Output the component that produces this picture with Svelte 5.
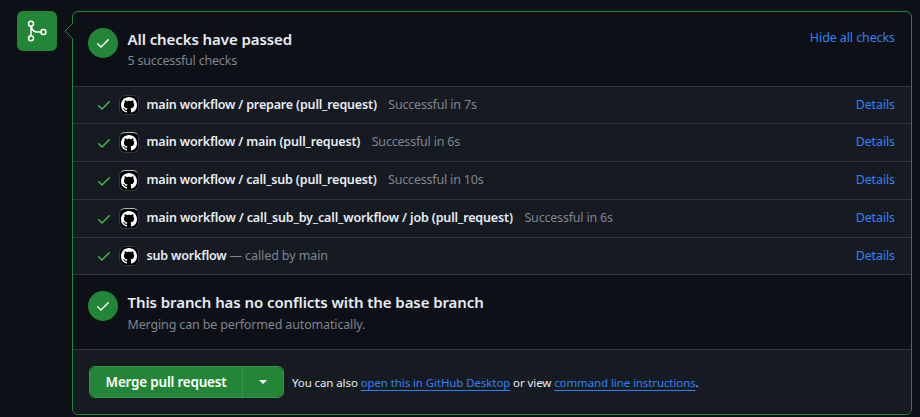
<script>
  const checks = [
    { name: 'main workflow / prepare (pull_request)', note: 'Successful in 7s' },
    { name: 'main workflow / main (pull_request)', note: 'Successful in 6s' },
    { name: 'main workflow / call_sub (pull_request)', note: 'Successful in 10s' },
    { name: 'main workflow / call_sub_by_call_workflow / job (pull_request)', note: 'Successful in 6s' },
    { name: 'sub workflow', note: '— called by main', inline: true }
  ];
</script>

{#snippet tick()}
  <svg class="tick" viewBox="0 0 16 16" width="16" height="16" fill="currentColor"><path d="M13.78 4.22a.75.75 0 0 1 0 1.06l-7.25 7.25a.75.75 0 0 1-1.06 0L2.22 9.28a.751.751 0 0 1 .018-1.042.751.751 0 0 1 1.042-.018L6 10.94l6.72-6.72a.75.75 0 0 1 1.06 0Z" /></svg>
{/snippet}

<main>
  <div class="badge">
    <svg viewBox="0 0 24 24" width="24" height="24" fill="none" stroke="currentColor" stroke-width="1.500"><circle cx="6" cy="4.700" r="2.500" /><circle cx="6" cy="19.200" r="2.500" /><circle cx="18.400" cy="13" r="2.500" /><path d="M6 7.200v9.500M6 7.200C7 11 9 13 12.500 13H15.900" /></svg>
  </div>
  <section class="box">
    <svg class="pointer" width="9" height="16" viewBox="0 0 9 16"><path d="M9 0 1 8l8 8Z" fill="#0d1117" /><path d="M8.5 .5 1 8l7.500 7.500" fill="none" stroke="#238636" /></svg>
    <header class="status">
      <span class="circle">{@render tick()}</span>
      <div class="copy">
        <h3 class="passed">All checks have passed</h3>
        <p class="count">5 successful checks</p>
      </div>
      <a class="hide" href="#checks">Hide all checks</a>
    </header>
    <ul>
      {#each checks as c}
        <li>
          <span class="ok">{@render tick()}</span>
          <span class="avatar">
            <svg viewBox="0 0 16 16" width="16" height="16" fill="#fff"><path d="M8 0c4.420 0 8 3.580 8 8a8.013 8.013 0 0 1-5.450 7.590c-.4.080-.55-.17-.55-.38 0-.27.010-1.130.010-2.200 0-.75-.25-1.230-.54-1.480 1.780-.2 3.650-.88 3.650-3.950 0-.88-.31-1.590-.82-2.150.080-.2.360-1.020-.08-2.120 0 0-.67-.22-2.200.82-.64-.18-1.320-.27-2-.27s-1.360.090-2 .27c-1.530-1.030-2.200-.82-2.200-.82-.44 1.100-.16 1.920-.08 2.120-.51.560-.82 1.280-.82 2.150 0 3.060 1.860 3.750 3.640 3.950-.23.200-.44.550-.51 1.070-.46.210-1.610.550-2.330-.66-.15-.24-.6-.83-1.230-.82-.67.010-.27.380.010.530.340.190.730.900.820 1.130.160.450.680 1.310 2.690.940 0 .67.010 1.300.010 1.490 0 .21-.15.450-.55.380A7.995 7.995 0 0 1 0 8c0-4.420 3.580-8 8-8Z" /></svg>
          </span>
          <strong>{c.name}</strong>
          <span class="note" class:inline={c.inline}>{c.note}</span>
          <a class="details" href="#details">Details</a>
        </li>
      {/each}
    </ul>
    <div class="status conflicts">
      <span class="circle">{@render tick()}</span>
      <div class="copy">
        <h3 class="branch">This branch has no conflicts with the base branch</h3>
        <p class="merging">Merging can be performed automatically.</p>
      </div>
    </div>
    <footer>
      <div class="group">
        <button class="merge">Merge pull request</button>
        <button class="more" aria-label="Select merge method"><svg width="8" height="4" viewBox="0 0 8 4"><path d="M0 0h8L4 4Z" fill="#fff" /></svg></button>
      </div>
      <p class="also">You can also <a href="#desktop">open this in GitHub Desktop</a> or view <a href="#cli">command line instructions</a>.</p>
    </footer>
  </section>
</main>

<style>
  :global(body) { margin: 0; background: #0d1117; }
  main { box-sizing: border-box; width: 920px; height: 417px; padding: 11px 8px 2px 17px; display: flex; align-items: flex-start; gap: 15px; background: #0d1117; color: #e6edf3; font-family: "Noto Sans", "Open Sans", sans-serif; font-size: 12.5px; letter-spacing: -0.19px; overflow: hidden; }
  .badge { width: 40px; height: 40px; flex: none; border-radius: 6px; background: #238636; color: #fff; display: flex; align-items: center; justify-content: center; }
  svg { display: block; flex: none; }
  .box { position: relative; box-sizing: border-box; width: 840px; height: 404px; border: 1px solid #238636; border-radius: 6px; display: flex; flex-direction: column; }
  .pointer { position: absolute; left: -9px; top: 11px; }
  a { color: #2f81f7; text-decoration: none; }
  h3, p, ul { margin: 0; padding: 0; }
  .status { box-sizing: border-box; flex: none; height: 74px; padding: 16px 16px 0 15px; display: flex; align-items: flex-start; gap: 9.5px; }
  .conflicts { border-top: 1px solid #30363d; height: 75px; }
  .circle { width: 30px; height: 30px; flex: none; border-radius: 50%; background: #238636; color: #fff; display: flex; align-items: center; justify-content: center; }
  .copy { white-space: nowrap; }
  h3 { font-size: 15px; line-height: 22px; font-weight: 600; letter-spacing: -0.08px; }
  .copy p { line-height: 22px; color: #7d8590; }
  .conflicts .copy p { line-height: 24px; letter-spacing: -0.15px; }
  .hide { margin-left: auto; line-height: 20px; letter-spacing: -0.1px; }
  ul { flex: none; list-style: none; background: #161b22; }
  li { box-sizing: border-box; height: 38px; border-top: 1px solid #30363d; padding: 0 16px 0 23px; display: flex; align-items: center; line-height: 20px; white-space: nowrap; }
  li:first-child, li:last-child { height: 37px; }
  .ok { color: #3fb950; margin-right: 7px; }
  .avatar { box-sizing: border-box; width: 20px; height: 20px; border: 1px solid #34383d; border-radius: 6px; background: #000; display: flex; align-items: center; justify-content: center; margin-right: 7.5px; }
  li:not(:first-child):not(:last-child) .avatar { height: 21px; border-top-color: #b4b7ba; }
  strong { font-weight: 600; letter-spacing: -0.17px; }
  li:nth-child(4) strong { letter-spacing: -0.14px; }
  strong, .note, .details { padding-bottom: 2px; }
  li:first-child > :is(strong, .note, .details), li:last-child > :is(strong, .note, .details) { padding-bottom: 0; }
  .note { color: #7d8590; margin-left: 11.5px; }
  .note.inline { margin-left: 3px; letter-spacing: -0.1px; }
  .details { margin-left: auto; letter-spacing: -0.12px; }
  footer { flex: 1; min-height: 0; border-top: 1px solid #30363d; border-radius: 0 0 5px 5px; background: #161b22; padding: 16px 16px 0; display: flex; align-items: flex-start; gap: 8px; }
  .group { display: flex; width: 195px; height: 32px; box-sizing: border-box; flex: none; border: 1px solid #37924a; border-radius: 6px; overflow: hidden; }
  button { border: 0; padding: 0; background: #238636; color: #fff; font-family: inherit; font-weight: 600; font-size: 13.5px; letter-spacing: -0.22px; display: flex; align-items: center; justify-content: center; }
  .merge { width: 152px; }
  .more { flex: 1; border-left: 1px solid #37924a; }
  .also { font-size: 11.5px; letter-spacing: -0.1px; line-height: 34px; white-space: nowrap; }
  .also a { text-decoration: underline; text-underline-offset: 3px; }
</style>
